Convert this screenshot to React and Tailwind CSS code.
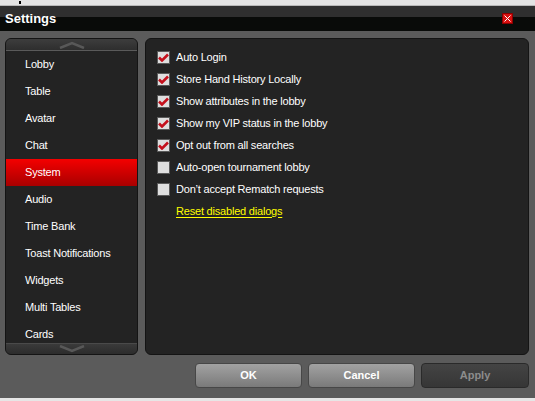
import { useState } from 'react';

const MENU = [
  'Lobby',
  'Table',
  'Avatar',
  'Chat',
  'System',
  'Audio',
  'Time Bank',
  'Toast Notifications',
  'Widgets',
  'Multi Tables',
  'Cards',
];

const OPTIONS = [
  { label: 'Auto Login', checked: true },
  { label: 'Store Hand History Locally', checked: true },
  { label: 'Show attributes in the lobby', checked: true },
  { label: 'Show my VIP status in the lobby', checked: true },
  { label: 'Opt out from all searches', checked: true },
  { label: 'Auto-open tournament lobby', checked: false },
  { label: 'Don\u2019t accept Rematch requests', checked: false },
];

function Checkbox({ checked }) {
  return (
    <span className="w-[13px] h-[13px] shrink-0 border border-[#5a5a5a] bg-[#dedede] flex items-center justify-center">
      {checked && (
        <svg width="11" height="9" viewBox="0 0 11 9">
          <path d="M1 4.5 L4 7.5 L10 1.5" fill="none" stroke="#c4101c" strokeWidth="2.6" strokeLinejoin="miter" />
        </svg>
      )}
    </span>
  );
}

function Chevron({ down }) {
  return (
    <svg width="26" height="8" viewBox="0 0 26 8">
      <path
        d={down ? 'M1 1 L13 6 L25 1' : 'M1 7 L13 2 L25 7'}
        fill="none"
        stroke="#585858"
        strokeWidth="2.5"
      />
    </svg>
  );
}

export default function App() {
  const [active, setActive] = useState('System');
  const [options, setOptions] = useState(OPTIONS);

  const toggle = (index) => {
    setOptions(options.map((o, i) => (i === index ? { ...o, checked: !o.checked } : o)));
  };

  return (
    <div
      className="w-[535px] h-[401px] flex flex-col bg-[#5b5b5b] overflow-hidden text-[11px] tracking-[-0.2px] text-white"
      style={{ fontFamily: '"Liberation Sans", Arial, sans-serif' }}
    >
      {/* bande du haut */}
      <div className="h-[6px] shrink-0 bg-[#e3e3e3] border-b border-[#b8b8b8] relative">
        <span className="absolute left-[19px] top-[1px] w-[2px] h-[3px] bg-black" />
      </div>

      {/* barre de titre */}
      <div className="h-[25px] shrink-0 flex items-center justify-between bg-[linear-gradient(#2f2f2f_0%,#2f2f2f_42%,#090b09_46%,#090b09_100%)] pl-[5px] pr-[22px]">
        <span className="text-[13px] font-bold tracking-normal">Settings</span>
        <span className="w-[11px] h-[11px] bg-[#d81010] border border-[#8a0000] flex items-center justify-center">
          <svg width="7" height="7" viewBox="0 0 7 7">
            <path d="M0.5 0.5 L6.5 6.5 M6.5 0.5 L0.5 6.5" stroke="white" strokeWidth="1" />
          </svg>
        </span>
      </div>

      {/* corps */}
      <div className="flex-1 flex flex-col pt-[7px] pl-[5px] pr-[6px] pb-[10px]">
        <div className="flex gap-[7px] h-[317px]">
          {/* menu gauche */}
          <div className="w-[133px] flex flex-col bg-[#232323] border border-[#141414] rounded-[6px] overflow-hidden">
            <div className="h-[12px] shrink-0 flex items-center justify-center bg-[linear-gradient(#3d3d3d,#2e2e2e)] border-b border-[#5a5a5a]">
              <Chevron />
            </div>
            <ul className="flex-1 overflow-hidden">
              {MENU.map((item) => (
                <li
                  key={item}
                  onClick={() => setActive(item)}
                  className={
                    item === active
                      ? 'h-[27px] flex items-center pl-[19px] bg-[linear-gradient(#f40000,#a80000)] cursor-pointer'
                      : 'h-[27px] flex items-center pl-[19px] cursor-pointer'
                  }
                >
                  {item}
                </li>
              ))}
            </ul>
            <div className="h-[11px] shrink-0 flex items-center justify-center bg-[linear-gradient(#3a3a3a,#2c2c2c)] border-t border-[#4a4a4a]">
              <Chevron down />
            </div>
          </div>

          {/* options */}
          <div className="flex-1 bg-[#232323] border border-[#141414] rounded-[6px] pt-[7px] pl-[11px]">
            {options.map((option, index) => (
              <label
                key={option.label}
                onClick={() => toggle(index)}
                className="h-[22px] flex items-center gap-[6px] cursor-pointer"
              >
                <Checkbox checked={option.checked} />
                <span>{option.label}</span>
              </label>
            ))}
            <div className="h-[22px] flex items-center pl-[19px]">
              <a className="text-[#ffff00] underline underline-offset-2 cursor-pointer">Reset disabled dialogs</a>
            </div>
          </div>
        </div>

        {/* boutons */}
        <div className="mt-[8px] flex justify-end gap-[6px]">
          <button className="w-[107px] h-[25px] rounded-[4px] border border-[#474747] bg-[linear-gradient(#a2a2a2,#7a7a7a)] text-white text-[11px] font-bold tracking-normal">
            OK
          </button>
          <button className="w-[107px] h-[25px] rounded-[4px] border border-[#474747] bg-[linear-gradient(#a2a2a2,#7a7a7a)] text-white text-[11px] font-bold tracking-normal">
            Cancel
          </button>
          <button className="w-[108px] h-[25px] rounded-[4px] border border-[#2a2a2a] bg-[linear-gradient(#444,#363636)] text-[#8c8c8c] text-[11px] font-bold tracking-normal">
            Apply
          </button>
        </div>
      </div>

      <div className="h-[3px] shrink-0 bg-[#e6e6e6]" />
    </div>
  );
}
